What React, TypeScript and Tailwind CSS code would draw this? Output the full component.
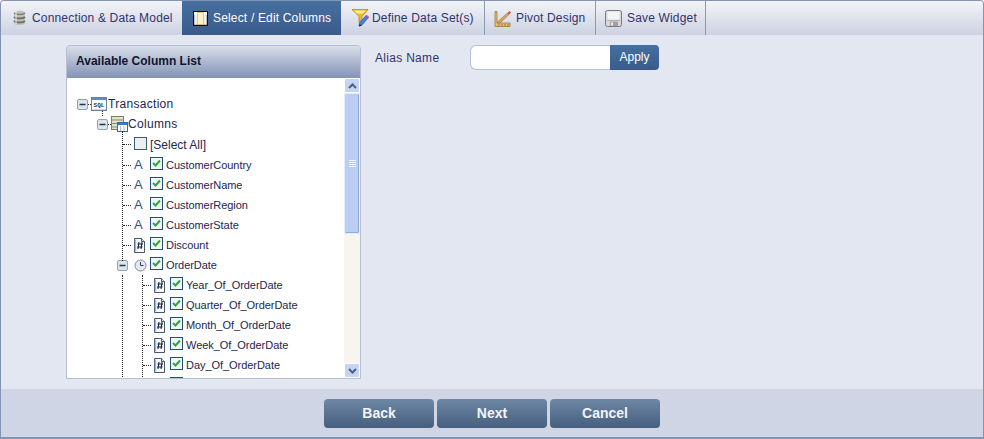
import type { ReactNode } from "react";

const Db = () => (
  <svg width="15" height="16" viewBox="0 0 15 16">
    <path d="M2 3c0-3 11-3 11 0v10c0 3-11 3-11 0z" fill="#c2c2bc" />
    <path d="M2 3c2 2 9 2 11 0" fill="none" stroke="#7d7d76" strokeWidth="1.500" />
    <path d="M2 7c2 2 9 2 11 0M2 11c2 2 9 2 11 0" fill="none" stroke="#6f6f68" strokeWidth="2" />
    <path d="M4 1v13" stroke="#eeeeea" strokeWidth="1.500" opacity=".7" />
  </svg>
);

const TableIcon = () => (
  <svg width="15" height="15" viewBox="0 0 15 15">
    <rect x=".5" y=".5" width="14" height="14" fill="#efeee8" stroke="#111" strokeWidth="1.400" />
    <rect x="1" y="1" width="13" height="3" fill="#f8f8f5" />
    <rect x="4.500" y="1.500" width="6" height="12" fill="#fdf3c8" stroke="#e8971a" strokeDasharray="1 1" />
  </svg>
);

const Funnel = () => (
  <svg width="17" height="18" viewBox="0 0 17 18">
    <path d="M0 .5h16l-6 7v3l-3 3V7.500z" fill="#f7b916" stroke="#a97b08" strokeWidth=".7" />
    <path d="M2 1.500h12l-3 3H5z" fill="#fff1a0" />
    <path d="M7.500 14l6.500-7.500 2.500 2-6.500 7.500-3 1z" fill="#3f86dd" stroke="#23508f" strokeWidth=".7" />
    <path d="M13.500 7l1-1.200 2.500 2-1 1.200z" fill="#e8486a" />
    <path d="M7.200 17.500l.5-2.500 2 1.700z" fill="#222" />
  </svg>
);

const Ruler = () => (
  <svg width="18" height="17" viewBox="0 0 18 17">
    <path d="M1 1.500h2V13h13v3.500H1z" fill="#e6bd7d" stroke="#a37434" strokeWidth=".8" />
    <path d="M3 12.500L13.500 3l1.500 1.500L6 13z" fill="#d9a860" stroke="#a37434" strokeWidth=".7" />
    <path d="M13.500 3L15.500 1 17 2.500 15 4.500z" fill="#dd4a3a" />
    <path d="M5 14v2M8 14v2M11 14v2M14 14v2" stroke="#a37434" />
  </svg>
);

const Floppy = () => (
  <svg width="17" height="17" viewBox="0 0 17 17">
    <path d="M2.500 .5h12a2 2 0 0 1 2 2v12a2 2 0 0 1-2 2h-12a2 2 0 0 1-2-2v-12a2 2 0 0 1 2-2z" fill="#d9d9d9" stroke="#77797c" />
    <rect x="2.500" y="1.500" width="12" height="8" fill="#f4f4f4" />
    <path d="M2 10.500h13" stroke="#b4b4b4" />
    <rect x="5" y="11.500" width="8" height="4.500" fill="#a2a2a2" />
    <rect x="6" y="12.500" width="2" height="3" fill="#ececec" />
  </svg>
);

const Expander = () => (
  <svg width="11" height="11" viewBox="0 0 11 11" className="shrink-0">
    <rect x=".5" y=".5" width="10" height="10" rx="1.500" fill="#dce5ea" stroke="#8ca3b8" />
    <path d="M2.500 5.500h6" stroke="#22364c" strokeWidth="1.500" />
  </svg>
);

const SqlIcon = () => (
  <svg width="16" height="14" viewBox="0 0 16 14" className="shrink-0">
    <rect x=".5" y=".5" width="15" height="13" fill="#fff" stroke="#6d80a8" />
    <rect x="1" y="1" width="14" height="2" fill="#5b8ad6" />
    <rect x="1" y="12" width="14" height="1" fill="#cfd6e6" />
    <text x="8" y="10" textAnchor="middle" fontSize="6" fontWeight="700" fontFamily="'Liberation Mono', monospace" fill="#25324f">SQL</text>
  </svg>
);

const ColumnsIcon = () => (
  <svg width="17" height="16" viewBox="0 0 17 16" className="shrink-0">
    <rect x=".5" y=".5" width="12" height="13" fill="#e4e0c4" stroke="#7f7d5a" />
    <path d="M.5 4h12M.5 7.500h12M.5 11h12" stroke="#8f8d6a" />
    <rect x="6.500" y="6.500" width="10" height="9" fill="#fff" stroke="#3c68a8" />
    <rect x="7" y="7" width="9" height="2" fill="#3c78c8" />
    <path d="M9.500 10v5M13 10v5" stroke="#a9bedc" />
  </svg>
);

const DocIcon = () => (
  <svg width="13" height="15" viewBox="0 0 13 15" className="shrink-0">
    <path d="M1.500 .5h7l3 3v11h-10z" fill="#fff" stroke="#44556e" />
    <path d="M8.500 .5v3h3" fill="#dfe5ef" stroke="#44556e" />
    <path d="M2.500 1.500v12" stroke="#9fb3d8" strokeWidth="1.500" />
    <path d="M6 4l-1 7M9 4l-1 7M4.500 6h5.500M4 9h5.500" stroke="#16233f" strokeWidth="1.100" fill="none" />
  </svg>
);

const ClockIcon = () => (
  <svg width="13" height="13" viewBox="0 0 13 13" className="shrink-0">
    <circle cx="6.500" cy="6.500" r="5.500" fill="#e4e8ec" stroke="#7f8a99" />
    <path d="M6.500 3v3.500h3" fill="none" stroke="#33405a" />
  </svg>
);

const Check = ({ checked = true }: { checked?: boolean }) => (
  <svg width="13" height="13" viewBox="0 0 13 13" className="-mt-[3px] shrink-0">
    <rect x=".5" y=".5" width="12" height="12" fill={checked ? "#f5f6f3" : "#eef0ee"} stroke={checked ? "#1f5078" : "#3c5a7c"} />
    {checked && <path d="M3 6l2.500 2.500 4.500-5" fill="none" stroke="#27a83a" strokeWidth="2" />}
  </svg>
);

const tabs = [
  { label: "Connection & Data Model", icon: <Db />, w: "w-[181px]", pl: "pl-[11px]", gap: "gap-[5px]" },
  { label: "Select / Edit Columns", icon: <TableIcon />, w: "w-[159px]", pl: "pl-[11px]", gap: "gap-[5px]", active: true },
  { label: "Define Data Set(s)", icon: <Funnel />, w: "w-[144px]", pl: "pl-[11px]", gap: "gap-[3px]" },
  { label: "Pivot Design", icon: <Ruler />, w: "w-[111px]", pl: "pl-[9px]", gap: "gap-[4px]" },
  { label: "Save Widget", icon: <Floppy />, w: "w-[110px]", pl: "pl-[9px]", gap: "gap-[5px]" },
];

const Row = ({ pl, h = "h-5", children }: { pl: string; h?: string; children: ReactNode }) => (
  <div className={`flex shrink-0 items-center ${h} ${pl}`}>{children}</div>
);

// short dotted stub between the tree line and an icon
const Stub = ({ w }: { w: string }) => (
  <span className={`h-0 shrink-0 border-t border-dotted border-[#222] ${w}`} />
);

const Label = ({ children }: { children: ReactNode }) => (
  <span className="ml-[3px] whitespace-nowrap pt-px text-[11px] tracking-[-0.05px] text-[#22254f]">{children}</span>
);

const stringColumns = ["CustomerCountry", "CustomerName", "CustomerRegion", "CustomerState"];
const dateParts = ["Year_Of_OrderDate", "Quarter_Of_OrderDate", "Month_Of_OrderDate", "Week_Of_OrderDate", "Day_Of_OrderDate"];

const Tree = () => (
  <div className="relative flex min-w-0 flex-1 flex-col overflow-hidden bg-white pt-[16px]">
    <span className="absolute left-[35px] top-[33px] h-[5px] border-l border-dotted border-[#222]" />
    <span className="absolute left-[55px] top-[53px] h-[130px] border-l border-dotted border-[#222]" />
    <span className="absolute left-[55px] top-[197px] h-[110px] border-l border-dotted border-[#222]" />
    <span className="absolute left-[75px] top-[197px] h-[110px] border-l border-dotted border-[#222]" />
    <Row pl="pl-[10px]">
      <Expander />
      <Stub w="w-[3px]" />
      <SqlIcon />
      <span className="ml-px text-xs tracking-[0.3px] text-[#22254f]">Transaction</span>
    </Row>
    <Row pl="pl-[30px]">
      <Expander />
      <Stub w="w-[3px]" />
      <ColumnsIcon />
      <span className="text-xs tracking-[0.3px] text-[#22254f]">Columns</span>
    </Row>
    <Row pl="pl-[56px]" h="h-[21px]">
      <Stub w="w-[8px]" />
      <span className="w-[3px]" />
      <svg width="13" height="13" viewBox="0 0 13 13" className="-mt-[2px] shrink-0">
        <rect x=".5" y=".5" width="12" height="12" fill="#eef0ee" stroke="#3c5a7c" />
      </svg>
      <span className="ml-[3px] text-xs text-[#22254f]">[Select All]</span>
    </Row>
    {stringColumns.map((name) => (
      <Row key={name} pl="pl-[56px]">
        <Stub w="w-[8px]" />
        <span className="ml-[3px] w-[16px] text-[13px] text-[#2f4f80]">A</span>
        <Check />
        <Label>{name}</Label>
      </Row>
    ))}
    <Row pl="pl-[56px]">
      <Stub w="w-[8px]" />
      <span className="w-[2px]" />
      <DocIcon />
      <span className="w-[4px]" />
      <Check />
      <Label>Discount</Label>
    </Row>
    <Row pl="pl-[50px]">
      <Expander />
      <span className="w-[6px]" />
      <ClockIcon />
      <span className="w-[3px]" />
      <Check />
      <Label>OrderDate</Label>
    </Row>
    {dateParts.map((name) => (
      <Row key={name} pl="pl-[76px]">
        <Stub w="w-[8px]" />
        <span className="w-[2px]" />
        <DocIcon />
        <span className="w-[4px]" />
        <Check />
        <Label>{name}</Label>
      </Row>
    ))}
    <Row pl="pl-[76px]">
      <Stub w="w-[8px]" />
      <span className="w-[2px]" />
      <DocIcon />
      <span className="w-[4px]" />
      <Check />
    </Row>
  </div>
);

const Scrollbar = () => (
  <div className="flex w-[16px] shrink-0 flex-col bg-[#f6f5f0]">
    <div className="flex h-[15px] shrink-0 items-center justify-center rounded-[2px] border border-white bg-[#c6d3f3]">
      <svg width="9" height="6" viewBox="0 0 9 6">
        <path d="M1 5l3.500-3.500L8 5" fill="none" stroke="#4d6185" strokeWidth="2" />
      </svg>
    </div>
    <div className="flex h-[141px] shrink-0 flex-col items-center justify-center gap-px rounded-[2px] border border-[#e4ebfa] bg-[#bccdf4] shadow-[inset_-1px_-1px_0_#94a9d6]">
      <span className="h-px w-[7px] bg-[#eef3fd]" />
      <span className="h-px w-[7px] bg-[#eef3fd]" />
      <span className="h-px w-[7px] bg-[#eef3fd]" />
      <span className="h-px w-[7px] bg-[#eef3fd]" />
    </div>
    <div className="flex-1" />
    <div className="flex h-[15px] shrink-0 items-center justify-center rounded-[2px] border border-white bg-[#c6d3f3]">
      <svg width="9" height="6" viewBox="0 0 9 6">
        <path d="M1 1l3.500 3.500L8 1" fill="none" stroke="#4d6185" strokeWidth="2" />
      </svg>
    </div>
  </div>
);

const FooterButton = ({ label }: { label: string }) => (
  <button className="h-[29px] w-[110px] rounded-[4px] bg-gradient-to-b from-[#6e87a5] to-[#465f7e] text-sm font-bold text-[#f2f5fa]">
    {label}
  </button>
);

export default function App() {
  return (
    <div className="flex h-[439px] w-[984px] flex-col overflow-hidden rounded-t-[4px] border border-b-2 border-[#8294b2] bg-[#e3e7f2] font-['Liberation_Sans',Arial,sans-serif]">
      {/* Tabs */}
      <div className="flex h-[34px] shrink-0 bg-gradient-to-b from-[#f3f4f8] to-[#ccd2e2]">
        {tabs.map((tab) => (
          <div
            key={tab.label}
            className={`flex h-full items-center ${tab.w} ${tab.pl} ${tab.gap} ${
              tab.active
                ? "bg-gradient-to-b from-[#45709f] to-[#3a5a8c] text-white"
                : "border-r border-[#8a9ab5] text-[#32336a] first:border-r-0"
            }`}
          >
            {tab.icon}
            <span className="whitespace-nowrap text-xs tracking-[0.17px]">{tab.label}</span>
          </div>
        ))}
      </div>

      {/* Body */}
      <div className="flex min-h-0 flex-1 gap-[14px] pl-[65px] pt-[10px]">
        <div className="flex h-[334px] w-[295px] shrink-0 flex-col overflow-hidden rounded-t-[4px] border border-[#b4c0d2]">
          <div className="flex h-[32px] shrink-0 items-center bg-gradient-to-b from-[#d9dee9] to-[#8393b6] pb-[2px] pl-[9px] text-xs font-bold text-[#10152c]">
            Available Column List
          </div>
          <div className="flex min-h-0 flex-1">
            <Tree />
            <Scrollbar />
          </div>
        </div>

        <div className="flex h-[25px] items-center">
          <span className="w-[95px] text-xs tracking-[0.3px] text-[#32336a]">Alias Name</span>
          <input className="h-[25px] w-[140px] rounded-l-[6px] border border-r-0 border-[#b4c0d2] bg-white outline-none" />
          <button className="h-[25px] w-[49px] rounded-r-[4px] bg-gradient-to-b from-[#45709f] to-[#3a5a8c] pb-[2px] text-xs text-white">
            Apply
          </button>
        </div>
      </div>

      {/* Footer */}
      <div className="flex h-[48px] shrink-0 items-center justify-center gap-[3px] bg-[#cfd5e5]">
        <FooterButton label="Back" />
        <FooterButton label="Next" />
        <FooterButton label="Cancel" />
      </div>
    </div>
  );
}
